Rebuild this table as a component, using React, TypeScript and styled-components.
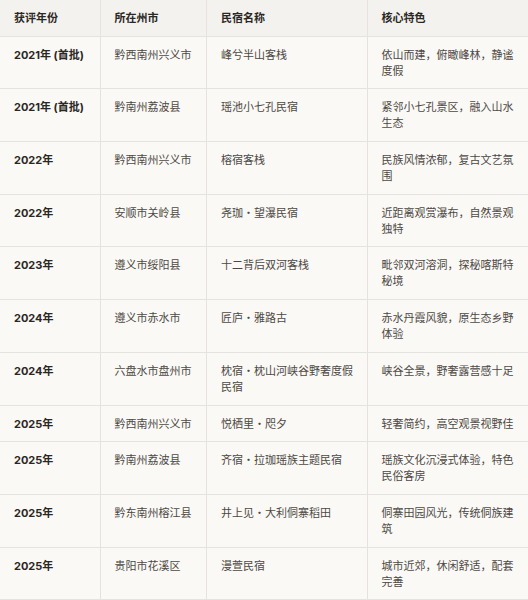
import styled, { createGlobalStyle } from 'styled-components'

export const GlobalStyle = createGlobalStyle`
  * {
    box-sizing: border-box;
  }

  body {
    margin: 0;
    background-color: #faf9f6;
    font-family: 'Inter', 'Noto Sans CJK SC', sans-serif;
  }
`

interface Row {
  year: string
  city: string
  name: string
  feature: string
}

const rows: Row[] = [
  { year: '2021年 (首批)', city: '黔西南州兴义市', name: '峰兮半山客栈', feature: '依山而建，俯瞰峰林，静谧度假' },
  { year: '2021年 (首批)', city: '黔南州荔波县', name: '瑶池小七孔民宿', feature: '紧邻小七孔景区，融入山水生态' },
  { year: '2022年', city: '黔西南州兴义市', name: '榕宿客栈', feature: '民族风情浓郁，复古文艺氛围' },
  { year: '2022年', city: '安顺市关岭县', name: '尧珈・望瀑民宿', feature: '近距离观赏瀑布，自然景观独特' },
  { year: '2023年', city: '遵义市绥阳县', name: '十二背后双河客栈', feature: '毗邻双河溶洞，探秘喀斯特秘境' },
  { year: '2024年', city: '遵义市赤水市', name: '匠庐・雅路古', feature: '赤水丹霞风貌，原生态乡野体验' },
  { year: '2024年', city: '六盘水市盘州市', name: '枕宿・枕山河峡谷野奢度假民宿', feature: '峡谷全景，野奢露营感十足' },
  { year: '2025年', city: '黔西南州兴义市', name: '悦栖里・咫夕', feature: '轻奢简约，高空观景视野佳' },
  { year: '2025年', city: '黔南州荔波县', name: '齐宿・拉珈瑶族主题民宿', feature: '瑶族文化沉浸式体验，特色民俗客房' },
  { year: '2025年', city: '黔东南州榕江县', name: '井上见・大利侗寨稻田', feature: '侗寨田园风光，传统侗族建筑' },
  { year: '2025年', city: '贵阳市花溪区', name: '漫萱民宿', feature: '城市近郊，休闲舒适，配套完善' },
]

const Table = styled.table`
  width: 528px;
  border-collapse: collapse;
  table-layout: fixed;
  font-size: 11px;
  line-height: 16px;
`

const Col = styled.col<{ $w: number }>`
  width: ${(p) => p.$w}px;
`

const HeadRow = styled.tr`
  background-color: #f3f2ef;
`

const HeadCell = styled.th`
  text-align: left;
  font-weight: 600;
  color: #2b2723;
  padding: 10px 12px 9.7px 14px;
  border-bottom: 1px solid #e6e3de;
  border-right: 1px solid #e6e3de;

  &:last-child {
    border-right: none;
  }
`

const Cell = styled.td<{ $strong?: boolean }>`
  vertical-align: top;
  padding: 10px 12px 9.7px 14px;
  color: ${(p) => (p.$strong ? '#2b2723' : '#4d4844')};
  font-weight: ${(p) => (p.$strong ? 700 : 400)};
  border-bottom: 1px solid #e6e3de;
  border-right: 1px solid #e6e3de;
  word-break: break-all;

  &:last-child {
    border-right: none;
  }
`

export default function App() {
  return (
    <>
      <GlobalStyle />
      <Table>
        <colgroup>
          <Col $w={100} />
          <Col $w={106.5} />
          <Col $w={160.5} />
          <Col $w={161} />
        </colgroup>
        <thead>
          <HeadRow>
            <HeadCell>获评年份</HeadCell>
            <HeadCell>所在州市</HeadCell>
            <HeadCell>民宿名称</HeadCell>
            <HeadCell>核心特色</HeadCell>
          </HeadRow>
        </thead>
        <tbody>
          {rows.map((r, i) => (
            <tr key={i}>
              <Cell $strong>{r.year}</Cell>
              <Cell>{r.city}</Cell>
              <Cell>{r.name}</Cell>
              <Cell>{r.feature}</Cell>
            </tr>
          ))}
        </tbody>
      </Table>
    </>
  )
}
